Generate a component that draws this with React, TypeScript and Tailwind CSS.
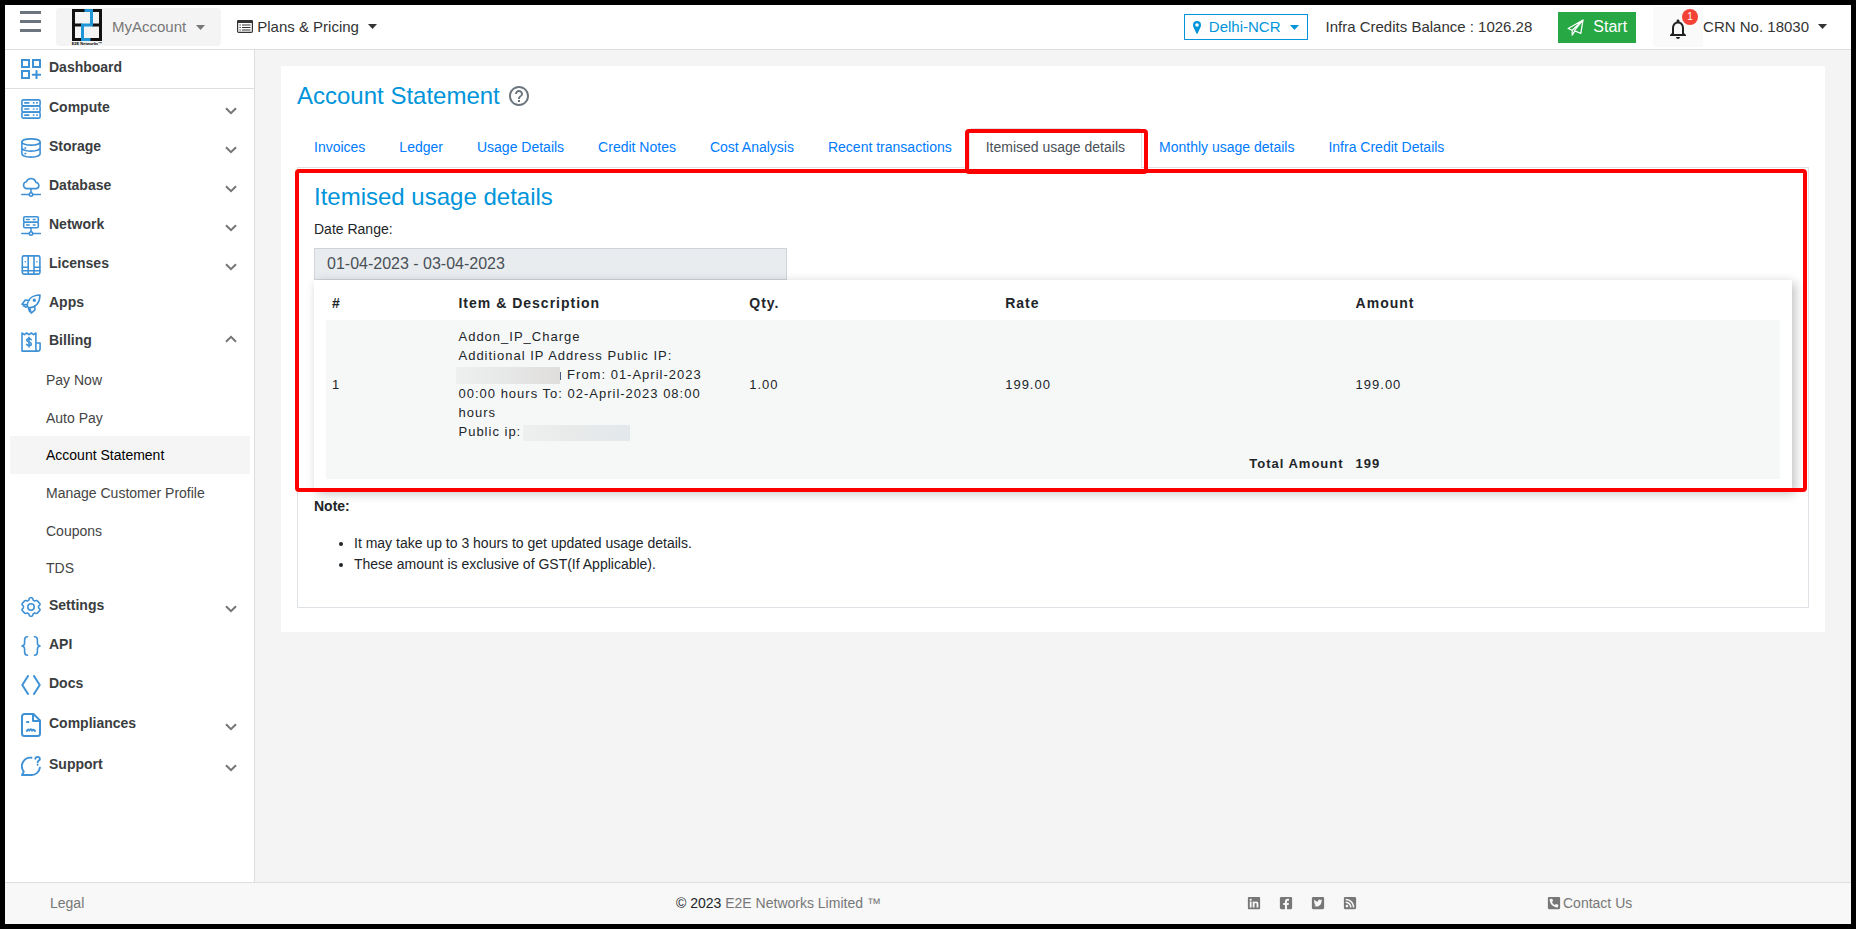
import type { ReactNode } from "react";
import { MdHelpOutline, MdNotificationsNone } from "react-icons/md";
import {
  FaFacebookSquare,
  FaLinkedin,
  FaPhoneSquareAlt,
  FaRssSquare,
  FaTwitterSquare,
} from "react-icons/fa";

function Glyph({ children, tall = false }: { children: ReactNode; tall?: boolean }) {
  return (
    <svg
      viewBox={tall ? "0 0 20 24" : "0 0 20 20"}
      className={tall ? "h-6 w-5 shrink-0" : "h-5 w-5 shrink-0"}
      fill="none"
      stroke="#3f91d6"
      strokeWidth="1.6"
      strokeLinecap="round"
      strokeLinejoin="round"
      aria-hidden="true"
    >
      {children}
    </svg>
  );
}

const icons = {
  dashboard: (
    <Glyph>
      <g strokeWidth="2" strokeLinejoin="miter">
        <path d="M1 1h7v7H1zM12 1h7v7h-7zM1 12h7v7H1zM15.5 12v7.5M11.8 15.8h7.6" />
      </g>
    </Glyph>
  ),
  compute: (
    <Glyph>
      <rect x="0.9" y="0.9" width="18.2" height="6" rx="1.4" />
      <rect x="0.9" y="7" width="18.2" height="6" rx="1.4" />
      <rect x="0.9" y="13.1" width="18.2" height="6" rx="1.4" />
      <path d="M3.8 3.9h4M3.8 10h4M3.8 16.1h4M12.5 3.9h.4M15.8 3.9h.4M12.5 10h.4M15.8 10h.4M12.5 16.1h.4M15.8 16.1h.4" />
    </Glyph>
  ),
  storage: (
    <Glyph>
      <ellipse cx="10" cy="4" rx="9.1" ry="3.1" />
      <path d="M.9 4v11.8c0 1.9 4 3.3 9.1 3.3s9.100-1.400 9.100-3.300V4M.9 9.800c0 1.900 4 3.300 9.100 3.300s9.100-1.400 9.100-3.300M4 10.100h.6M4 15.600h.6" />
    </Glyph>
  ),
  database: (
    <Glyph>
      <path d="M5.6 11.600h9a3.100 3.100 0 0 0 .3-6.200A5 5 0 0 0 5.400 4.700 3.500 3.500 0 0 0 5.600 11.600zM10 11.600v4M.8 17.500h7M12.300 17.500h7" />
      <circle cx="10" cy="17.500" r="1.700" />
    </Glyph>
  ),
  network: (
    <Glyph>
      <rect x="2.700" y="0.800" width="14.600" height="5.500" rx="1.300" />
      <rect x="2.700" y="6.300" width="14.600" height="5.500" rx="1.300" />
      <path d="M5.600 3.500h2.600M5.600 9h2.600M12.400 3.500h1.600M12.400 9h1.600M10 11.700v4M.8 17.500h7M12.300 17.500h7" />
      <circle cx="10" cy="17.500" r="1.700" />
    </Glyph>
  ),
  licenses: (
    <Glyph>
      <rect x="1.300" y="0.900" width="17.600" height="18.200" rx="1.600" />
      <path d="M7.200 1v18M13 1v18M1.300 12.300h5.900M13 12.300h5.900M1.300 15.800h5.900M13 15.800h5.900M7.200 15.800H13M4.300 6.700v.1M15.900 6.700v.1" />
    </Glyph>
  ),
  apps: (
    <Glyph>
      <path d="M6.200 12.200C6.400 6 10.500 1.200 19 1c-.2 8-4.500 12.300-11 12.900zM8.400 6.500 4.300 6 1 10.200l4.700.6M13.600 11.800l.4 4-3.800 3.300-1.400-5M5.200 13.200 2.400 11.800M7.500 14.500l1.200 3.100" />
      <circle cx="13.300" cy="6.300" r="0.900" />
    </Glyph>
  ),
  billing: (
    <Glyph>
      <path d="M1 19.100V1l2.400 1.700L5.700 1l2.300 1.700L10.300 1l2.300 1.700L14.900 1v15.400M1 19.100h15.800a2.300 2.300 0 0 0 2.300-2.300V11h-4.200v5.900a2.100 2.100 0 0 0 2.100 2.200" />
      <path d="M10.200 7.700C9.800 6.900 9 6.600 8 6.600c-1.300 0-2.200.7-2.200 1.700 0 2.400 4.500 1.200 4.500 3.700 0 1-1 1.700-2.300 1.700-1.100 0-2-.4-2.400-1.300M8 5.300v9.700" />
    </Glyph>
  ),
  settings: (
    <Glyph>
      <circle cx="10" cy="10" r="3.200" />
      <path d="M8.200 1.800Q8.400.8 9.400.8h1.200q1 0 1.200 1l.3 1.300 1.700 1 1.300-.5q1-.3 1.500.5l2.300 2.600q.4.900-.3 1.500l-1 .8v2l1 .8q.7.600.3 1.500l-2.300 2.600q-.5.800-1.500.5l-1.300-.5-1.700 1-.3 1.300q-.2 1-1.200 1H9.400q-1 0-1.200-1l-.3-1.300-1.700-1-1.300.5q-1 .3-1.500-.5l-2.300-2.600q-.4-.9.3-1.500l1-.8V9l-1-.8q-.7-.6-.3-1.500l2.300-2.600q.5-.8 1.500-.5l1.300.5 1.700-1z" />
    </Glyph>
  ),
  api: (
    <Glyph>
      <path d="M6.500.8C4.300.8 3.600 1.800 3.600 4v3c0 1.800-.8 2.600-2.600 3 1.800.4 2.600 1.200 2.600 3v3c0 2.200.7 3.200 2.900 3.200M13.500.8c2.200 0 2.900 1 2.900 3.200v3c0 1.800.8 2.600 2.600 3-1.800.4-2.600 1.200-2.600 3v3c0 2.200-.7 3.200-2.900 3.200" />
    </Glyph>
  ),
  docs: (
    <Glyph>
      <path strokeWidth="2" d="M7 1 1.300 10 7 19M13 1l5.700 9-5.700 9" />
    </Glyph>
  ),
  compliances: (
    <Glyph tall>
      <path strokeWidth="2" d="M3.500 1h9L19 7.500v13a2.500 2.500 0 0 1-2.500 2.500h-13A2.500 2.500 0 0 1 1 20.500v-17A2.500 2.500 0 0 1 3.500 1zM12 1.500V8h6.500" />
      <path d="M6 9h1.400M5.800 18c1.200-2 2.200-2.100 2.700-.4.900-1.800 1.900-1.800 2.600 0 .8-1.200 1.900-1.200 2.900.4" strokeWidth="2" />
    </Glyph>
  ),
  support: (
    <Glyph>
      <path strokeWidth="1.900" d="M10.500 1.700A8.600 8.600 0 0 0 2.800 15.600L1 19h9.700a8.400 8.400 0 0 0 8.200-7.300M14.300 2.700c.3-1.300 1.200-1.800 2.300-1.800 1.300 0 2.300.7 2.300 2 0 1.500-2.200 1.700-2.200 3.300M16.600 8.600v.2" />
    </Glyph>
  ),
};

function Chevron({ up = false }: { up?: boolean }) {
  return (
    <svg
      viewBox="0 0 12 8"
      className={up ? "mb-1.5 ml-auto h-2 w-3 rotate-180" : "mt-1 ml-auto h-2 w-3"}
      fill="none"
      stroke="#757575"
      strokeWidth="2"
      aria-hidden="true"
    >
      <path d="m1 1.200 5 5 5-5" />
    </svg>
  );
}

function Caret() {
  return (
    <svg viewBox="0 0 9 5" className="h-[5px] w-[9px] shrink-0" fill="currentColor" aria-hidden="true">
      <path d="M0 0h9L4.500 5z" />
    </svg>
  );
}

function NavRow({
  icon,
  label,
  arrow,
  size = "h-[39px]",
}: {
  icon: ReactNode;
  label: string;
  arrow?: "up" | "down";
  size?: string;
}) {
  const body = (
    <>
      {icon}
      <span className="pb-1">{label}</span>
      {arrow && <Chevron up={arrow === "up"} />}
    </>
  );
  const look = `flex w-full items-center gap-2 pr-[17px] pl-4 text-left font-bold text-[#3a3d40] ${size}`;
  return (
    <li>
      {arrow ? (
        <button type="button" aria-expanded={arrow === "up"} className={look}>
          {body}
        </button>
      ) : (
        <a href="#" className={look}>
          {body}
        </a>
      )}
    </li>
  );
}

const billingLinks = [
  "Pay Now",
  "Auto Pay",
  "Account Statement",
  "Manage Customer Profile",
  "Coupons",
  "TDS",
];

const tabs = [
  "Invoices",
  "Ledger",
  "Usage Details",
  "Credit Notes",
  "Cost Analysis",
  "Recent transactions",
  "Itemised usage details",
  "Monthly usage details",
  "Infra Credit Details",
];

function Logo() {
  return (
    <span className="flex w-[30px] flex-col items-center">
      <svg viewBox="0 0 30 32" className="h-8 w-[30px]" fill="none" strokeWidth="3" aria-hidden="true">
        <path stroke="#111" d="M18 1.500H1.500v29h8M20 1.500h8.500v29H12M1.500 16H10M20 16h8.500" />
        <path stroke="#2196d6" d="M12.500 1.500h7V16h-9v14.500h8" />
      </svg>
      <span className="text-[4px] leading-[5px] font-bold whitespace-nowrap text-black">E2E Networks™</span>
    </span>
  );
}

function Header() {
  return (
    <header className="flex h-[45px] items-center border-b border-[#dedede] bg-white text-[15px] text-[#333]">
      <button type="button" aria-label="Toggle menu" className="ml-[15px] flex h-[38px] w-[21px] flex-col gap-1.5 pt-[3px]">
        <span className="h-[3px] w-full bg-[#6c757d]" />
        <span className="h-[3px] w-full bg-[#6c757d]" />
        <span className="h-[3px] w-full bg-[#6c757d]" />
      </button>
      <button
        type="button"
        className="ml-[15px] flex h-[38px] items-center rounded bg-[#f4f4f4] px-4 text-[#777]"
      >
        <Logo />
        <span className="mr-2.5 ml-2.5">MyAccount</span>
        <Caret />
      </button>
      <button type="button" className="ml-4 flex items-center">
        <svg viewBox="0 0 16 13" className="h-[13px] w-4" aria-hidden="true">
          <rect x="0.600" y="0.600" width="14.800" height="11.800" rx="1.200" fill="none" stroke="#333" strokeWidth="1.200" />
          <path d="M0 1.500Q0 0 1.500 0h13Q16 0 16 1.500V3H0z" fill="#333" />
          <path d="M2.500 5h1.300M2.500 7.500h1.300M2.500 10h1.300M5 5h8.500M5 7.500h8.500M5 10h8.500" stroke="#333" strokeWidth="1.200" />
        </svg>
        <span className="mr-[9px] ml-1">Plans &amp; Pricing</span>
        <Caret />
      </button>

      <button
        type="button"
        className="ml-auto flex h-[26px] items-center border border-[#0095da] px-2 text-[#0095da]"
      >
        <svg viewBox="0 0 8 13" className="h-[13px] w-2" fill="currentColor" aria-hidden="true">
          <path fillRule="evenodd" d="M4 0a4 4 0 0 1 4 4c0 .7-.1 1.200-.3 1.700L4.700 12.300q-.7 1.200-1.400 0L.3 5.700A4.500 4.500 0 0 1 0 4a4 4 0 0 1 4-4zm0 2.200a1.800 1.800 0 1 0 0 3.600 1.800 1.800 0 0 0 0-3.600z" />
        </svg>
        <span className="mr-[9px] ml-2">Delhi-NCR</span>
        <Caret />
      </button>
      <span className="ml-[18px]">Infra Credits Balance : 1026.28</span>
      <button
        type="button"
        className="ml-[26px] flex h-[31px] items-center gap-[9px] bg-[#28a745] px-[9px] text-base text-white"
      >
        <svg viewBox="0 0 18 18" className="h-[17px] w-[17px]" fill="none" stroke="#fff" strokeWidth="1.300" strokeLinejoin="round" aria-hidden="true">
          <path d="M17 1 1.200 10l4.300 1.900L17 1l-2.400 14.300-5-2.200M5.500 11.900v5.300l2.800-4.600M17 1 7.800 12.400l1.800.7" />
        </svg>
        Start
      </button>
      <button
        type="button"
        aria-label="Notifications"
        className="relative ml-[17px] flex h-10 w-[50px] items-center justify-center bg-[#fafafa] pt-1 text-[#222]"
      >
        <MdNotificationsNone className="h-6 w-6" />
        <span className="absolute top-0.5 right-[5px] flex h-4 w-4 items-center justify-center rounded-full bg-[#f44336] text-[10px] text-white">
          1
        </span>
      </button>
      <button type="button" className="mr-6 flex items-center gap-[9px]">
        CRN No. 18030
        <Caret />
      </button>
    </header>
  );
}

function Sidebar() {
  return (
    <nav className="w-[250px] shrink-0 border-r border-[#dedede] bg-white">
      <ul className="border-b border-[#dedede]">
        <NavRow icon={icons.dashboard} label="Dashboard" size="h-[38px]" />
      </ul>
      <ul>
        <NavRow icon={icons.compute} label="Compute" arrow="down" />
        <NavRow icon={icons.storage} label="Storage" arrow="down" />
        <NavRow icon={icons.database} label="Database" arrow="down" />
        <NavRow icon={icons.network} label="Network" arrow="down" />
        <NavRow icon={icons.licenses} label="Licenses" arrow="down" />
        <NavRow icon={icons.apps} label="Apps" />
        <NavRow icon={icons.billing} label="Billing" arrow="up" size="h-[38px]" />
        <li>
          <ul className="flex h-[226px] flex-col pr-1 pl-[5px]">
            {billingLinks.map((label) => (
              <li key={label} className="flex flex-1">
                <a
                  href="#"
                  className={
                    label === "Account Statement"
                      ? "flex flex-1 items-center bg-[#f5f5f5] pl-9 text-black"
                      : "flex flex-1 items-center pl-9 text-[#444]"
                  }
                >
                  {label}
                </a>
              </li>
            ))}
          </ul>
        </li>
        <NavRow icon={icons.settings} label="Settings" arrow="down" />
        <NavRow icon={icons.api} label="API" />
        <NavRow icon={icons.docs} label="Docs" />
        <NavRow icon={icons.compliances} label="Compliances" arrow="down" size="h-[42px]" />
        <NavRow icon={icons.support} label="Support" arrow="down" size="h-10" />
      </ul>
    </nav>
  );
}

function UsageTable() {
  return (
    <div className="bg-white px-3 pb-[11px] shadow-[3px_3px_10px_rgba(0,0,0,0.25)]">
      <table className="w-full table-fixed text-left text-[13px] leading-[19px] tracking-[1px]">
        <colgroup>
          <col className="w-[8.7%]" />
          <col className="w-[20%]" />
          <col className="w-[17.6%]" />
          <col className="w-[24.1%]" />
          <col className="w-[29.6%]" />
        </colgroup>
        <thead className="text-sm">
          <tr className="h-10">
            <th className="px-1.5 pt-1.5">#</th>
            <th className="px-1.5 pt-1.5">Item &amp; Description</th>
            <th className="px-1.5 pt-1.5">Qty.</th>
            <th className="px-1.5 pt-1.5">Rate</th>
            <th className="px-1.5 pt-1.5">Amount</th>
          </tr>
        </thead>
        <tbody className="bg-[#f6f8f8]">
          <tr>
            <td className="px-1.5">1</td>
            <td className="px-1.5 py-[7px]">
              Addon_IP_Charge
              <br />
              Additional IP Address Public IP:
              <br />
              <span className="-ml-0.5 inline-block h-[17px] w-[104px] bg-gradient-to-r from-[#eeefef] via-[#e6e7e7] to-[#e0dedd] align-middle" />
              <span className="mr-px inline-block h-2 w-px bg-[#4a5a78] align-middle" />{" "}
              From: 01-April-2023
              <br />
              00:00 hours To: 02-April-2023 08:00
              <br />
              hours
              <br />
              Public ip:
              <span className="ml-0.5 inline-block h-4 w-[107px] bg-gradient-to-r from-[#eeefef] via-[#e8eaea] to-[#e3e8ec] align-middle" />
            </td>
            <td className="px-1.5">1.00</td>
            <td className="px-1.5">199.00</td>
            <td className="px-1.5">199.00</td>
          </tr>
          <tr className="font-bold">
            <td colSpan={4} className="px-1.5 py-1.5 text-right">
              Total Amount
            </td>
            <td className="px-1.5 py-1.5">199</td>
          </tr>
        </tbody>
      </table>
    </div>
  );
}

function Statement() {
  return (
    <section className="bg-white px-4 pt-4 pb-6">
      <h1 className="flex items-center gap-[7px] text-2xl leading-7 text-[#0095da]">
        Account Statement
        <MdHelpOutline className="h-6 w-6 text-[#6c757d]" />
      </h1>
      <div className="mt-[18px] flex">
        {tabs.map((tab) =>
          tab === "Itemised usage details" ? (
            <a
              key={tab}
              href="#"
              aria-current="page"
              className="relative z-10 -mb-px rounded-t border border-b-0 border-[#dee2e6] bg-white px-4 py-2 leading-[21px] text-[#495057]"
            >
              {tab}
              <span className="pointer-events-none absolute top-0 -right-[7px] -left-[5px] h-[45px] rounded-sm border-4 border-[#ff0000]" />
            </a>
          ) : (
            <a
              key={tab}
              href="#"
              className="border border-transparent px-4 py-2 leading-[21px] text-[#007bff]"
            >
              {tab}
            </a>
          ),
        )}
      </div>
      <div className="relative border border-[#dee2e6] px-4 pt-[15px] pb-8">
        <h2 className="text-2xl leading-7 text-[#0095da]">Itemised usage details</h2>
        <label htmlFor="range" className="mt-2 block leading-[21px]">
          Date Range:
        </label>
        <input
          id="range"
          readOnly
          defaultValue="01-04-2023 - 03-04-2023"
          className="mt-2 block h-8 w-full max-w-[473px] border border-[#ced4da] bg-[#e9ecef] px-3 text-base text-[#495057]"
        />
        <UsageTable />
        <p className="mt-1.5 leading-[21px] font-bold">Note:</p>
        <ul className="mt-4 list-disc pl-10 leading-[21px]">
          <li>It may take up to 3 hours to get updated usage details.</li>
          <li>These amount is exclusive of GST(If Applicable).</li>
        </ul>
        <span className="pointer-events-none absolute top-px right-px -left-[3px] h-[323px] rounded-sm border-4 border-[#ff0000]" />
      </div>
    </section>
  );
}

function Footer() {
  return (
    <footer className="grid h-[42px] grid-cols-[626fr_571fr_300fr_304fr] items-center border-t border-[#dedede] bg-[#f8f8f8] pb-0.5 pl-[45px] text-[#777]">
      <a href="#">Legal</a>
      <p>
        <span className="text-[#212529]">© 2023</span> <a href="#">E2E Networks Limited ™</a>
      </p>
      <div className="flex gap-[18px]">
        <a href="#" aria-label="LinkedIn"><FaLinkedin className="h-3.5 w-3.5" /></a>
        <a href="#" aria-label="Facebook"><FaFacebookSquare className="h-3.5 w-3.5" /></a>
        <a href="#" aria-label="Twitter"><FaTwitterSquare className="h-3.5 w-3.5" /></a>
        <a href="#" aria-label="RSS"><FaRssSquare className="h-3.5 w-3.5" /></a>
      </div>
      <a href="#" className="flex items-center gap-0.5">
        <FaPhoneSquareAlt className="h-3.5 w-3.5" />
        Contact Us
      </a>
    </footer>
  );
}

export default function App() {
  return (
    <div className="flex min-h-screen flex-col border-[5px] border-black bg-[#f4f4f4] font-['Liberation_Sans',Arial,sans-serif] text-sm text-[#212529]">
      <Header />
      <div className="flex flex-1">
        <Sidebar />
        <main className="min-w-0 flex-1 pt-4 pr-[26px] pl-[26px]">
          <Statement />
        </main>
      </div>
      <Footer />
    </div>
  );
}
